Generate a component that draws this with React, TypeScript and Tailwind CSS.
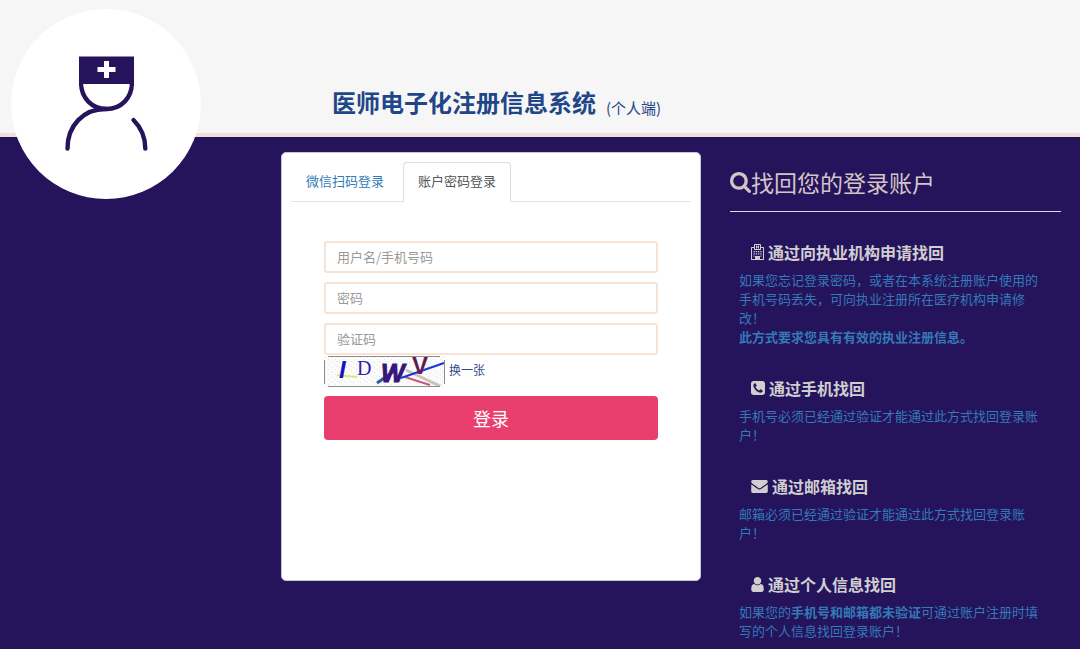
import { useState } from "react";
import type { ReactNode } from "react";

const SearchIcon = () => (
  <svg viewBox="0 128 1664 1664" className="size-[21px] shrink-0 fill-current" aria-hidden="true">
    <path d="M1152 832q0-185-131.5-316.5t-316.5-131.5-316.5 131.5-131.5 316.5 131.5 316.5 316.5 131.5 316.5-131.5 131.5-316.5zm512 832q0 52-38 90t-90 38q-54 0-90-38l-343-342q-179 124-399 124-143 0-273.5-55.5t-225-150-150-225-55.5-273.5 55.5-273.5 150-225 225-150 273.5-55.5 273.5 55.5 225 150 150 225 55.5 273.5q0 220-124 399l343 343q37 37 37 90z" />
  </svg>
);

const HospitalIcon = () => (
  <svg viewBox="0 0 13 16" className="h-4 w-[13px] shrink-0 fill-current" aria-hidden="true">
    <path
      fillRule="evenodd"
      d="M3 3V1q0-1 1-1h5q1 0 1 1v2h2.5q.5 0 .5.5v12q0 .5-.5.5H.5q-.5 0-.5-.5v-12Q0 3 .5 3zM4 1v4h5V1zM1 4v11h3v-3h5v3h3V4h-2v1.5q0 .5-.5.5h-6Q3 6 3 5.5V4z"
    />
    <path d="M5 1.5h1v1h1v-1h1v3H7v-1H6v1H5zM2.5 7h1.3v1.2H2.5zM4.8 7h1.3v1.2H4.8zM7 7h1.3v1.2H7zM9.3 7h1.3v1.2H9.3zM2.5 9.3h1.3v1.2H2.5zM4.8 9.3h1.3v1.2H4.8zM7 9.3h1.3v1.2H7zM9.3 9.3h1.3v1.2H9.3zM2.5 11.6h1v1.2h-1zM9.5 11.6h1v1.2h-1zM6 12.5h1V15H6z" />
  </svg>
);

const PhoneIcon = () => (
  <svg viewBox="128 128 1536 1536" className="size-[14px] shrink-0 fill-current" aria-hidden="true">
    <path d="M1408 1193q0-11-2-16-3-8-38.5-29.5t-88.5-49.5l-53-29q-5-3-19-13t-25-15-21-5q-18 0-47 32.5t-57 65.5-44 33q-7 0-16.5-3.5t-15.5-6.5-17-9.5-14-8.5q-99-55-170.5-126.5t-126.5-170.5q-2-3-8.5-14t-9.5-17-6.5-15.5-3.5-16.5q0-13 20.5-33.5t45-38.5 45-39.5 20.5-36.5q0-10-5-21t-15-25-13-19q-3-6-15-28.5t-25-45.5-26.5-47.5-25-40.5-16.5-18-16-2q-48 0-101 22-46 21-80 94.5t-34 130.5q0 16 2.5 34t5 30.5 9 33 10 29.5 12.5 33 11 30q60 164 216.5 320.5t320.5 216.5q6 2 30 11t33 12.5 29.5 10 33 9 30.5 5 34 2.5q57 0 130.5-34t94.5-80q22-53 22-101zm256-777v960q0 119-84.5 203.5t-203.5 84.5h-960q-119 0-203.5-84.5t-84.5-203.5v-960q0-119 84.5-203.5t203.5-84.5h960q119 0 203.5 84.5t84.5 203.5z" />
  </svg>
);

const MailIcon = () => (
  <svg viewBox="0 256 1792 1408" className="h-[13px] w-[17px] shrink-0 fill-current" aria-hidden="true">
    <path d="M1792 710v794q0 66-47 113t-113 47h-1472q-66 0-113-47t-47-113v-794q44 49 101 87 362 246 497 345 57 42 92.5 65.5t94.5 48 110 24.5h2q51 0 110-24.5t94.5-48 92.5-65.5q170-123 498-345 57-39 100-87zm0-294q0 79-49 151t-122 123q-376 261-468 325-10 7-42.5 31t-54 38.5-52 32.5-57.5 27-50 9h-2q-23 0-50-9t-57.5-27-52-32.5-54-38.5-42.5-31q-91-64-262-182.5t-205-142.5q-62-42-117-115.5t-55-136.5q0-78 41.5-130t118.5-52h1472q65 0 112.5 47t47.5 113z" />
  </svg>
);

const UserIcon = () => (
  <svg viewBox="256 128 1280 1536" className="h-[15px] w-[13px] shrink-0 fill-current" aria-hidden="true">
    <path d="M1536 1399q0 109-62.5 187t-150.5 78h-854q-88 0-150.5-78t-62.5-187q0-85 8.5-160.5t31.5-152 58.5-131 94-89 134.5-34.5q131 128 313 128t313-128q76 0 134.5 34.5t94 89 58.5 131 31.5 152 8.5 160.5zm-256-887q0 159-112.5 271.5t-271.5 112.5-271.5-112.5-112.5-271.5 112.5-271.5 271.5-112.5 271.5 112.5 112.5 271.5z" />
  </svg>
);

const Logo = () => (
  <div className="absolute top-[9px] left-[11px] size-[190px] rounded-full bg-white">
    <svg viewBox="11 9 190 190" className="size-full" role="img" aria-label="医师">
      <path d="M79 56.5h55V86h-55z" fill="#25135c" />
      <path d="M104 61h5v6h6.500v5H109v6h-5v-6h-6.500v-5h6.500z" fill="#fff" />
      <path d="M83 84h46.500C129 98 119 107 106.500 107S83.500 98 83 84z" fill="#fff" />
      <g fill="none" stroke="#25135c" strokeWidth="4.4" strokeLinecap="round">
        <path d="M81.200 83C81 98 92 109 106.500 109S132 98 131.800 83" />
        <path d="M106.500 109C83 108.500 67.500 126 67.500 148.500" />
        <path d="M133.500 120C141.500 128 145.300 138 145.300 148.500" />
      </g>
      <path d="M83.500 84h46v3h-46z" fill="#fff" />
    </svg>
  </div>
);

const Captcha = () => (
  <svg viewBox="0 0 121 31" className="h-[31px] w-[121px]" role="img" aria-label="验证码图片">
    <defs>
      <pattern id="grain" width="7" height="5" patternUnits="userSpaceOnUse">
        <path d="M1 1h1v1H1zM4 3h1v1H4zM6 0h1v1H6z" fill="#e2e6e2" />
      </pattern>
    </defs>
    <rect width="121" height="31" fill="#fcfcfc" />
    <rect width="121" height="31" fill="url(#grain)" />
    <path d="M13 19l20 2" stroke="#dcea75" strokeWidth="2" />
    <path d="M53 27L72 14" stroke="#20609c" strokeWidth="3" />
    <path d="M82 14l34 16" stroke="#c8c4b8" strokeWidth="3" />
    <path d="M81 21l25 8" stroke="#cf5576" strokeWidth="2" />
    <path d="M77 22L120 7" stroke="#1537d8" strokeWidth="2" />
    <g fontFamily="Liberation Sans, sans-serif" fontWeight="bold">
      <text x="15" y="22" fontSize="24" fontStyle="italic" fill="#1b10c4">I</text>
      <text x="33" y="19" fontSize="20" fontWeight="normal" fontFamily="Liberation Serif, serif" fill="#3322a6">D</text>
      <text x="57" y="26" fontSize="25" fontStyle="italic" fill="#38147b" stroke="#38147b">W</text>
      <text x="88" y="18" fontSize="24" fill="#641b55">V</text>
    </g>
    <path d="M4 .5h112M4 30.5h112M.5 4v24M120.5 4v24" stroke="#8c8c8c" />
  </svg>
);

type MethodProps = {
  icon: ReactNode;
  title: string;
  children: ReactNode;
};

const Method = ({ icon, title, children }: MethodProps) => (
  <section className="pr-3 pl-[9px]">
    <h3 className="mb-2 flex items-center gap-1 pl-3 text-base leading-5 font-bold text-[#d0cfd0]">
      {icon}
      <a href="#">{title}</a>
    </h3>
    <p className="text-[13px] leading-[19px] text-[#337ab7]">{children}</p>
  </section>
);

const fields = [
  { id: "account", type: "text", label: "用户名/手机号码" },
  { id: "password", type: "password", label: "密码" },
  { id: "code", type: "text", label: "验证码" },
];

const tabs = ["微信扫码登录", "账户密码登录"];

const LoginCard = () => {
  const [active, setActive] = useState(1);

  return (
    <div className="min-h-[429px] self-start rounded-[5px] border border-[#c9c6d3] bg-white p-[9px]">
      <div role="tablist" className="flex gap-1 border-b border-[#e4e4e4]">
        {tabs.map((tab, i) => (
          <button
            key={tab}
            role="tab"
            aria-selected={i === active}
            onClick={() => setActive(i)}
            className={
              i === active
                ? "-mb-px h-10 rounded-t border border-[#ddd] border-b-white bg-white px-[14px] pb-0.5 text-[13px] text-[#555]"
                : "-mb-px h-10 border border-transparent px-[14px] pb-0.5 text-[13px] text-[#337ab7]"
            }
          >
            {tab}
          </button>
        ))}
      </div>
      <form className="px-[33px] pt-[39px]" onSubmit={(e) => e.preventDefault()}>
        <div className="flex flex-col gap-[9px]">
          {fields.map((field) => (
            <input
              key={field.id}
              id={field.id}
              type={field.type}
              aria-label={field.label}
              placeholder={field.label}
              className="h-8 w-full rounded-[3px] border-2 border-[#f6e3d3] px-[11px] pb-0.5 text-[13px] placeholder:text-[#999]"
            />
          ))}
        </div>
        <div className="mt-px flex items-start gap-1">
          <Captcha />
          <a href="#" className="text-[12px] leading-7 text-[#34498a]">换一张</a>
        </div>
        <button type="submit" className="mt-[9px] h-11 w-full rounded bg-[#e93f6f] text-lg text-white">
          登录
        </button>
      </form>
    </div>
  );
};

export default function App() {
  return (
    <div className="relative flex min-h-screen flex-col bg-[#25135c] font-['Noto_Sans_CJK_SC',sans-serif]">
      <header className="flex items-end gap-[10px] border-b-4 border-[#f0e0d9] bg-[#f6f6f6] pt-[84px] pb-[13px] pl-[332px] text-[#1f4788]">
        <h1 className="text-2xl leading-9 font-bold">医师电子化注册信息系统</h1>
        <span className="text-[15px] leading-6">(个人端)</span>
      </header>
      <Logo />
      <main className="grid grid-cols-[252px_minmax(0,420fr)_minmax(0,331fr)] gap-x-[29px] pt-[15px] pr-[19px] pb-1">
        <div className="col-start-2 grid">
          <LoginCard />
        </div>
        <aside>
          <h2 className="mt-[15px] mb-[30px] flex items-center border-b border-[#ddd] pb-[14px] text-[23px] leading-[30px] text-[#d3c5c5]">
            <SearchIcon />
            找回您的登录账户
          </h2>
          <div className="flex flex-col gap-8">
            <Method icon={<HospitalIcon />} title="通过向执业机构申请找回">
              如果您忘记登录密码，或者在本系统注册账户使用的手机号码丢失，可向执业注册所在医疗机构申请修改！
              <br />
              <b>此方式要求您具有有效的执业注册信息。</b>
            </Method>
            <Method icon={<PhoneIcon />} title="通过手机找回">
              手机号必须已经通过验证才能通过此方式找回登录账户！
            </Method>
            <Method icon={<MailIcon />} title="通过邮箱找回">
              邮箱必须已经通过验证才能通过此方式找回登录账户！
            </Method>
            <Method icon={<UserIcon />} title="通过个人信息找回">
              如果您的<b>手机号和邮箱都未验证</b>可通过账户注册时填写的个人信息找回登录账户！
            </Method>
          </div>
        </aside>
      </main>
    </div>
  );
}
